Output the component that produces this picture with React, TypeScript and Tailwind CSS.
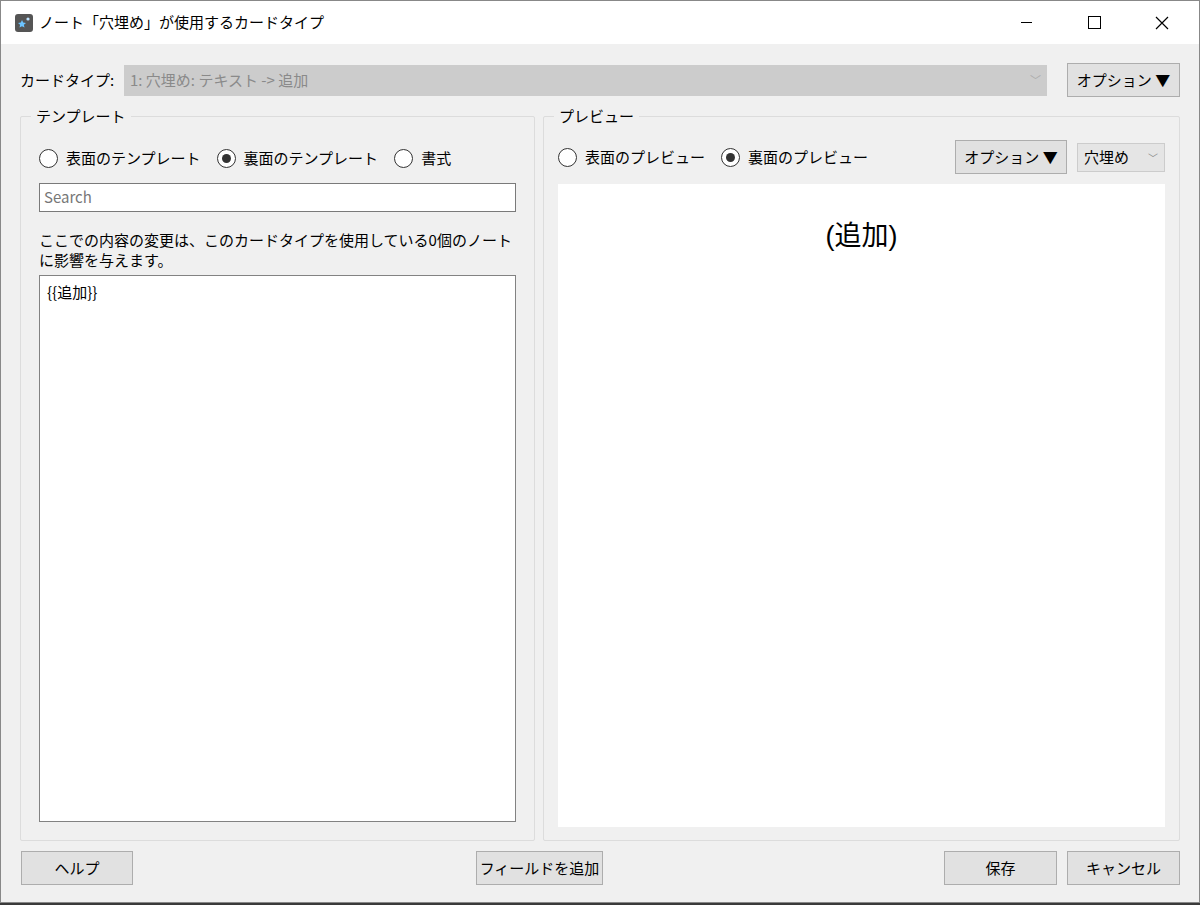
import React from 'react';

const FONT = { fontFamily: '"Noto Sans CJK JP", "Liberation Sans", sans-serif' };

function Radio({ checked, label }: { checked?: boolean; label: string }) {
  return (
    <label className="flex items-center gap-[8px]">
      <span className="flex h-[19px] w-[19px] items-center justify-center rounded-full border border-[#333] bg-white">
        {checked && <span className="h-[9px] w-[9px] rounded-full bg-[#333]" />}
      </span>
      <span>{label}</span>
    </label>
  );
}

function Btn({ children, className = '' }: { children: React.ReactNode; className?: string }) {
  return (
    <div className={`flex h-[34px] items-center justify-center border border-[#adadad] bg-[#e1e1e1] text-[15px] text-black ${className}`}>
      {children}
    </div>
  );
}

function Group({ title, className = '', children }: { title: string; className?: string; children: React.ReactNode }) {
  return (
    <div className={`relative mt-[10px] rounded-[2px] border border-[#dcdcdc] ${className}`}>
      <span className="absolute -top-[12px] left-[10px] bg-[#f0f0f0] px-[5px] text-[15px] leading-[22px]">{title}</span>
      {children}
    </div>
  );
}

export default function App() {
  return (
    <div style={FONT} className="h-[905px] w-[1200px] overflow-hidden bg-[#3a3a3a] text-[15px] text-black">
      <div className="flex h-[903px] flex-col border border-[#888] bg-[#f0f0f0]">
        <div className="flex h-[43px] items-center bg-white">
          <div className="ml-[14px] flex h-[18px] w-[18px] items-center justify-center rounded-[3px] bg-[#555]">
            <svg width="14" height="14" viewBox="0 0 14 14">
              <path d="M5 4l1.2 2.6 2.8.3-2.1 1.9.6 2.8L5 10.2 2.5 11.6l.6-2.8L1 6.9l2.8-.3z" fill="#6cc4ff" />
              <circle cx="11" cy="3" r="1.6" fill="#bfe3ff" />
            </svg>
          </div>
          <span className="ml-[6px] text-[15px]">ノート「穴埋め」が使用するカードタイプ</span>
          <div className="ml-auto flex h-full">
            <div className="flex w-[46px] items-center justify-center">
              <div className="h-px w-[11px] bg-black" />
            </div>
            <div className="ml-[22px] flex w-[46px] items-center justify-center">
              <div className="h-[13px] w-[13px] border border-black" />
            </div>
            <div className="ml-[22px] mr-[14px] flex w-[46px] items-center justify-center">
              <svg width="14" height="14" viewBox="0 0 14 14"><path d="M1 1l12 12M13 1L1 13" stroke="black" strokeWidth="1.2" /></svg>
            </div>
          </div>
        </div>

        <div className="flex flex-1 flex-col px-[19px]">
          <div className="mt-[20px] flex h-[32px] items-center">
            <span className="w-[104px]">カードタイプ:</span>
            <div className="flex h-[31px] flex-1 items-center justify-between border border-[#cccccc] bg-[#cccccc] px-[5px] text-[#8a8a8a]">
              <span>1: 穴埋め: テキスト -&gt; 追加</span>
              <span className="text-[11px] text-[#aaa]">﹀</span>
            </div>
            <Btn className="ml-[20px] w-[113px]">オプション ▼</Btn>
          </div>

          <div className="mt-[10px] flex h-[735px] gap-[8px]">
            <Group title="テンプレート" className="flex w-[515px] flex-col px-[18px]">
              <div className="mt-[30px] flex items-center gap-[16px]">
                <Radio label="表面のテンプレート" />
                <Radio checked label="裏面のテンプレート" />
                <Radio label="書式" />
              </div>
              <div className="mt-[13px] flex h-[29px] items-center border border-[#7a7a7a] bg-white px-[4px] text-[#777]">Search</div>
              <p className="mt-[18px] text-[15px] leading-[20px]">ここでの内容の変更は、このカードタイプを使用している0個のノートに影響を与えます。</p>
              <div className="mt-[5px] mb-[18px] flex-1 border border-[#828282] bg-white px-[7px] py-[5px]">{'{{追加}}'}</div>
            </Group>
            <Group title="プレビュー" className="flex flex-1 flex-col px-[14px]">
              <div className="mt-[23px] flex items-center">
                <div className="flex items-center gap-[16px]">
                  <Radio label="表面のプレビュー" />
                  <Radio checked label="裏面のプレビュー" />
                </div>
                <Btn className="ml-auto w-[112px]">オプション ▼</Btn>
                <div className="ml-[10px] flex h-[29px] w-[88px] items-center justify-between border border-[#cccccc] bg-[#e5e5e5] px-[6px]">
                  <span>穴埋め</span>
                  <span className="text-[10px] text-[#888]">﹀</span>
                </div>
              </div>
              <div className="mt-[10px] mb-[13px] flex flex-1 justify-center bg-white pt-[34px] text-[27px] leading-[36px]" style={{ fontFamily: '"Liberation Sans", "Noto Sans CJK JP", sans-serif' }}>
                (追加)
              </div>
            </Group>
          </div>

          <div className="mt-[10px] flex items-center">
            <Btn className="ml-[1px] w-[112px]">ヘルプ</Btn>
            <Btn className="ml-[343px] w-[127px]">フィールドを追加</Btn>
            <Btn className="ml-auto w-[113px]">保存</Btn>
            <Btn className="ml-[10px] w-[113px]">キャンセル</Btn>
          </div>
        </div>
      </div>
    </div>
  );
}
